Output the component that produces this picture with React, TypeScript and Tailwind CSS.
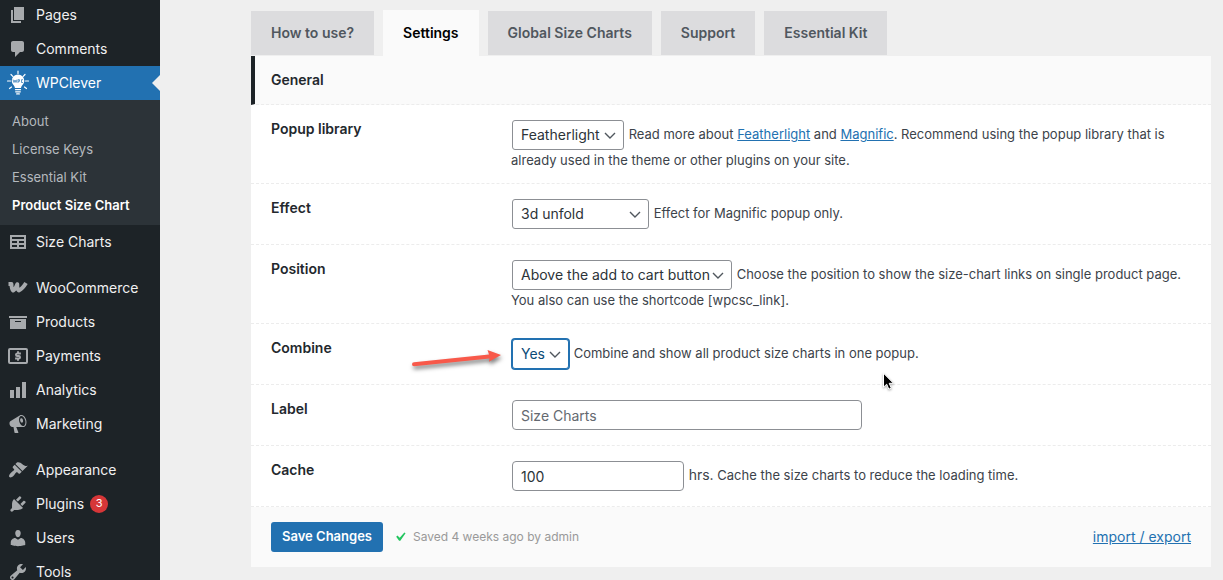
import { useState } from 'react'
import type { ReactNode } from 'react'

const icons: Record<string, ReactNode> = {
  pages: <path d="M6 15V2h10v13H6zm-1 1h8v2H3V5h2v11z" />,
  comments: (
    <path d="M5 2h9c1.1 0 2 .9 2 2v7c0 1.1-.9 2-2 2h-2l-5 5v-5H5c-1.1 0-2-.9-2-2V4c0-1.1.9-2 2-2z" />
  ),
  table: (
    <path d="M18 17V3H2v14h16zM16 7H4V5h12v2zm-7 4H4V9h5v2zm7 0h-5V9h5v2zm-7 4H4v-2h5v2zm7 0h-5v-2h5v2z" />
  ),
  woo: (
    <path
      d="M.5 6h3c0 2.800.5 5.600 1.600 6.600 1.800-1.200 3.300-3.600 4.200-6.400-.2 2.900.3 5.400 1.500 6.400 2.500-1.200 5-3.900 7.200-7.600"
      fill="none"
      stroke="currentColor"
      strokeWidth="3.900"
      strokeLinejoin="round"
    />
  ),
  archive: <path d="M19 4v2H1V4h18zM2 7h16v10H2V7zm11 3V9H7v1h6z" />,
  payments: (
    <g fill="none" stroke="currentColor">
      <rect x="1" y="3" width="18" height="14" rx="1" strokeWidth="2" />
      <path d="M12.900 7.500H9.200a1.250 1.250 0 0 0 0 2.500h1.600a1.250 1.250 0 0 1 0 2.500H7.100M10 5.300v2M10 12.500v2.200" strokeWidth="1.900" />
    </g>
  ),
  chart: <path d="M18 18V2h-4v16h4zm-6 0V7H8v11h4zm-6 0v-8H2v8h4z" />,
  megaphone: (
    <path d="M18.15 5.94c.46 1.62.38 3.22-.02 4.48-.42 1.28-1.26 2.18-2.3 2.48-.16.06-.26.06-.4.06-.06.02-.12.02-.18.02-.06.02-.14.02-.22.02h-6.8l2.22 5.5c.02.14-.06.26-.14.34-.08.1-.24.16-.34.16H6.95c-.1 0-.26-.06-.34-.16-.08-.08-.16-.2-.14-.34l-1-5.5H4.25l-.02-.02c-.5.06-1.08-.18-1.54-.62s-.88-1.08-1.06-1.88c-.24-.8-.2-1.56-.02-2.2.18-.62.58-1.08 1.06-1.3l.02-.02 9-5.4c.1-.06.18-.1.24-.16.06-.04.14-.08.24-.12.16-.08.28-.12.5-.18 1.04-.3 2.24.1 3.22.98s1.84 2.24 2.26 3.86zm-2.58 5.98h-.02c.4-.1.74-.34 1.04-.7.58-.7.86-1.76.86-3.04 0-.64-.1-1.3-.28-1.98-.34-1.36-1.02-2.5-1.78-3.24s-1.68-1.1-2.46-.88c-.82.22-1.4.96-1.7 2-.32 1.04-.28 2.36.06 3.72.38 1.36 1 2.5 1.8 3.24.78.74 1.62 1.1 2.48.88zm-2.54-7.72c.22-.04.42-.02.62.04.38.16.76.48 1.02 1s.42 1.2.42 1.78c0 .3-.04.56-.12.8-.18.48-.44.84-.86.94-.34.1-.8-.06-1.14-.4s-.64-.86-.78-1.5c-.18-.62-.12-1.24.02-1.72s.48-.84.82-.94z" />
  ),
  appearance: (
    <path d="M14.48 11.06L7.41 3.99l1.5-1.5c.5-.56 2.3-.47 3.51.32 1.21.8 1.43 1.28 2.91 2.1 1.18.64 2.45 1.26 4.45.85zm-.71.71L6.7 4.7 4.93 6.47c-.39.39-.39 1.02 0 1.41l1.06 1.06c.39.39.39 1.03 0 1.42-.6.6-1.43 1.11-2.21 1.69-.35.26-.7.53-1.01.84C1.43 14.23.4 16.08 1.4 17.07c.99 1 2.84-.03 4.18-1.36.31-.31.58-.66.85-1.02.57-.78 1.08-1.61 1.69-2.21.39-.39 1.02-.39 1.41 0l1.06 1.06c.39.39 1.02.39 1.41 0z" />
  ),
  plugins: (
    <path d="M13.11 4.36L9.87 7.6 8 5.73l3.24-3.24c.35-.34 1.05-.2 1.56.32.52.51.66 1.21.31 1.55zm-8 1.77l.91-1.12 9.01 9.01-1.19.84c-.71.71-2.63 1.16-3.82 1.16H6.14L4.9 17.26c-.59.59-1.54.59-2.12 0-.59-.58-.59-1.53 0-2.12l1.24-1.24v-3.88c0-1.13.4-3.19 1.09-3.89zm7.26 3.97l3.24-3.24c.34-.35 1.04-.21 1.55.31.52.51.66 1.21.31 1.55l-3.24 3.25z" />
  ),
  users: (
    <path d="M10 9.25c-2.27 0-2.73-3.44-2.73-3.44C7 4.02 7.82 2 9.97 2c2.16 0 2.98 2.02 2.71 3.81 0 0-.41 3.44-2.68 3.44zm0 2.57L12.72 10c2.39 0 4.52 2.33 4.52 4.53v2.49s-3.65 1.13-7.24 1.13c-3.65 0-7.24-1.13-7.24-1.13v-2.49c0-2.25 1.94-4.48 4.47-4.48z" />
  ),
  tools: (
    <path d="M16.68 9.77c-1.34 1.34-3.3 1.67-4.95.99l-5.41 6.52c-.99.99-2.59.99-3.58 0s-.99-2.59 0-3.57l6.52-5.42c-.68-1.65-.35-3.61.99-4.95 1.28-1.28 3.12-1.62 4.72-1.06l-2.89 2.89 2.82 2.82 2.86-2.87c.53 1.58.18 3.39-1.08 4.65zM3.81 16.21c.4.39 1.04.39 1.43 0 .4-.4.4-1.04 0-1.43-.39-.4-1.03-.4-1.43 0-.39.39-.39 1.03 0 1.43z" />
  ),
}

function Icon({ name }: { name: string }) {
  return (
    <svg viewBox="0 0 20 20" className="size-5 shrink-0 text-[#a7aaad]" fill="currentColor" aria-hidden="true">
      {icons[name]}
    </svg>
  )
}

function BulbIcon() {
  return (
    <svg viewBox="0 0 24 26" className="-mx-0.5 h-[26px] w-6 shrink-0" aria-hidden="true">
      <g stroke="#fff" strokeWidth="1.200" strokeLinecap="round">
        <path d="M12 1v2.500M5 4.500l1.800 1.800M19 4.500l-1.800 1.800M1.500 11h3M22.500 11h-3M3.500 18.500l2-1.500M20.500 18.500l-2-1.500" />
      </g>
      <path d="M12 4.500a6.300 6.300 0 0 0-6.300 6.300c0 3.200 2.800 4.300 3.300 7.200h6c.5-2.900 3.300-4 3.300-7.200A6.300 6.300 0 0 0 12 4.500z" fill="#fff" />
      <path d="M9.500 19.700h5M9.700 21.800h4.600M10.700 23.900h2.600" stroke="#fff" strokeWidth="1.300" strokeLinecap="round" />
      <path d="M7 9.500l1 3 1-2.500 1 2.500 1-3M12 13V9.700h1.500v1.600H12M17 9.700h-1.500v2.800H17" fill="none" stroke="#2271b1" strokeWidth=".7" />
    </svg>
  )
}

function MenuItem({ icon, label, badge }: { icon: string; label: string; badge?: number }) {
  return (
    <li>
      <a href="#" className="flex h-[34px] items-center gap-2 px-2">
        <Icon name={icon} />
        <span>{label}</span>
        {badge && (
          <span className="-ml-0.5 flex size-[18px] items-center justify-center rounded-full bg-[#d63638] text-[11px] text-white">
            {badge}
          </span>
        )}
      </a>
    </li>
  )
}

function Sidebar() {
  const submenu = ['About', 'License Keys', 'Essential Kit', 'Product Size Chart']

  return (
    <nav className="w-40 shrink-0 overflow-hidden bg-[#1d2327] text-sm text-[#f0f0f1]">
      <ul className="-mt-0.5">
        <MenuItem icon="pages" label="Pages" />
        <MenuItem icon="comments" label="Comments" />
        <li>
          <a href="#" className="relative flex h-[34px] items-center gap-2 bg-[#2271b1] px-2 text-white">
            <BulbIcon />
            <span>WPClever</span>
            <span className="absolute top-1/2 right-0 -mt-2 border-8 border-l-0 border-transparent border-r-[#efefef]" />
          </a>
          <ul className="bg-[#2c3338] pt-[7px] pb-1.5 text-[13px]">
            {submenu.map((item) => (
              <li key={item}>
                <a
                  href="#"
                  className={`flex h-7 items-center px-3 ${
                    item === 'Product Size Chart' ? 'font-semibold text-white' : 'text-[#b4b9be] hover:text-[#72aee6]'
                  }`}
                >
                  {item}
                </a>
              </li>
            ))}
          </ul>
        </li>
        <MenuItem icon="table" label="Size Charts" />
      </ul>
      <ul className="mt-3">
        <MenuItem icon="woo" label="WooCommerce" />
        <MenuItem icon="archive" label="Products" />
        <MenuItem icon="payments" label="Payments" />
        <MenuItem icon="chart" label="Analytics" />
        <MenuItem icon="megaphone" label="Marketing" />
      </ul>
      <ul className="mt-3">
        <MenuItem icon="appearance" label="Appearance" />
        <MenuItem icon="plugins" label="Plugins" badge={3} />
        <MenuItem icon="users" label="Users" />
        <MenuItem icon="tools" label="Tools" />
      </ul>
    </nav>
  )
}

function Row({ label, htmlFor, children }: { label: string; htmlFor: string; children: ReactNode }) {
  return (
    <div className="relative grid grid-cols-[240px_1fr] border-b border-dashed border-[#ececec] px-5 py-3.5">
      <label htmlFor={htmlFor} className="text-sm leading-5 font-semibold text-[#23282d]">
        {label}
      </label>
      <div className="text-[13px] leading-[18px] text-[#3c434a]">{children}</div>
    </div>
  )
}

function Select({
  id,
  options,
  width,
  active,
}: {
  id: string
  options: string[]
  width: string
  active?: boolean
}) {
  return (
    <span className={`relative m-px inline-block h-[30px] align-middle ${width}`}>
      <select
        id={id}
        className={`block size-full appearance-none rounded-[3px] border bg-white pr-4 pl-2 text-sm outline-none ${
          active ? 'border-[#2271b1] text-[#0a4b78] ring-1 ring-[#2271b1]' : 'border-[#8c8f94] text-[#2c3338]'
        }`}
      >
        {options.map((option) => (
          <option key={option}>{option}</option>
        ))}
      </select>
      <svg viewBox="0 0 16 16" className="pointer-events-none absolute top-2 right-1.5 size-4" aria-hidden="true">
        <path d="M3 5l5 5 5-5" fill="none" stroke="#50575e" strokeWidth="1.400" />
      </svg>
    </span>
  )
}

function RedArrow() {
  return (
    <svg viewBox="0 0 96 30" className="pointer-events-none absolute top-5 left-[158px] h-[30px] w-24 drop-shadow-[1px_3px_2px_rgba(0,0,0,0.5)]" aria-hidden="true">
      <path d="M5 18.200L80 10.500 78.500 6 92 11 80 17.800 80.500 14.500 5 22.200a2 2 0 0 1 0-4z" fill="#f8594a" />
    </svg>
  )
}

function Pointer() {
  return (
    <svg viewBox="0 0 14 20" className="pointer-events-none absolute top-12 left-[631px] h-5 w-3.5 drop-shadow-[0_1px_1px_rgba(0,0,0,0.35)]" aria-hidden="true">
      <path d="M1.500 1.200v14l3.200-3 2.100 5 2.500-1.100-2.100-4.800h4.300z" fill="#000" stroke="#fff" strokeWidth="1" />
    </svg>
  )
}

export default function App() {
  const [tab, setTab] = useState('Settings')
  const tabs = ['How to use?', 'Settings', 'Global Size Charts', 'Support', 'Essential Kit']
  const inputClass =
    'm-px h-[30px] rounded border border-[#8c8f94] bg-white px-2 align-middle text-sm text-[#2c3338] placeholder:text-[#646970] outline-none'

  return (
    <div className="flex h-screen overflow-hidden bg-[#efefef] font-['Inter',sans-serif]">
      <Sidebar />

      <main className="min-w-0 flex-1 pt-2.5 pr-3 pl-[91px]">
        {/* Tabs */}
        <div className="flex items-end gap-[9px]">
          {tabs.map((name) => (
            <button
              key={name}
              type="button"
              onClick={() => setTab(name)}
              className={`px-5 text-sm font-semibold whitespace-nowrap ${
                tab === name ? 'h-[46px] bg-[#fafafa] text-black' : 'mb-px h-11 bg-[#dcdcde] text-[#50575e]'
              }`}
            >
              {name}
            </button>
          ))}
        </div>

        {/* Settings panel */}
        <form className="bg-white" onSubmit={(e) => e.preventDefault()}>
          <h2 className="border-b border-l-4 border-dashed border-b-[#ececec] bg-[#fafafa] px-4 py-3.5 text-sm leading-5 font-semibold text-[#23282d] [border-left-color:#1d2327] [border-left-style:solid]">
            General
          </h2>

          <Row label="Popup library" htmlFor="library">
            <Select id="library" width="w-28" options={['Featherlight', 'Magnific']} /> Read more about{' '}
            <a href="#" className="text-[#2271b1] underline">Featherlight</a> and{' '}
            <a href="#" className="text-[#2271b1] underline">Magnific</a>. Recommend using the popup library that is
            already used in the theme or other plugins on your site.
          </Row>

          <Row label="Effect" htmlFor="effect">
            <Select id="effect" width="w-[137px]" options={['3d unfold', 'Zoom', 'Newspaper']} /> Effect for Magnific
            popup only.
          </Row>

          <Row label="Position" htmlFor="position">
            <Select id="position" width="w-55" options={['Above the add to cart button']} /> Choose the position to show
            the size-chart links on single product page. You also can use the shortcode [wpcsc_link].
          </Row>

          <Row label="Combine" htmlFor="combine">
            <Select id="combine" width="w-[57px]" options={['Yes', 'No']} active /> Combine and show all product size
            charts in one popup.
            <RedArrow />
            <Pointer />
          </Row>

          <Row label="Label" htmlFor="label">
            <input id="label" type="text" placeholder="Size Charts" className={`${inputClass} w-[350px]`} />
          </Row>

          <Row label="Cache" htmlFor="cache">
            <input id="cache" type="text" defaultValue="100" className={`${inputClass} w-[172px]`} />{' '}
            <span className="text-sm leading-[18px]">hrs.</span> Cache the size charts to reduce the loading time.
          </Row>

          {/* Footer */}
          <div className="flex items-center bg-[#fafafa] px-5 py-[15px]">
            <button type="submit" className="h-[30px] rounded-[3px] bg-[#2271b1] px-[11px] text-[13px] font-semibold text-white">
              Save Changes
            </button>
            <svg viewBox="0 0 20 20" className="ml-2 size-[18px]" aria-hidden="true">
              <path d="M14.83 4.89l1.34.94-5.81 8.38H9.02L5.78 9.67l1.34-1.25 2.57 2.4z" fill="#22c55e" />
            </svg>
            <span className="ml-1 text-xs text-[#999]">Saved 4 weeks ago by admin</span>
            <a href="#" className="ml-auto text-sm text-[#2271b1] underline">import / export</a>
          </div>
        </form>
      </main>
    </div>
  )
}
